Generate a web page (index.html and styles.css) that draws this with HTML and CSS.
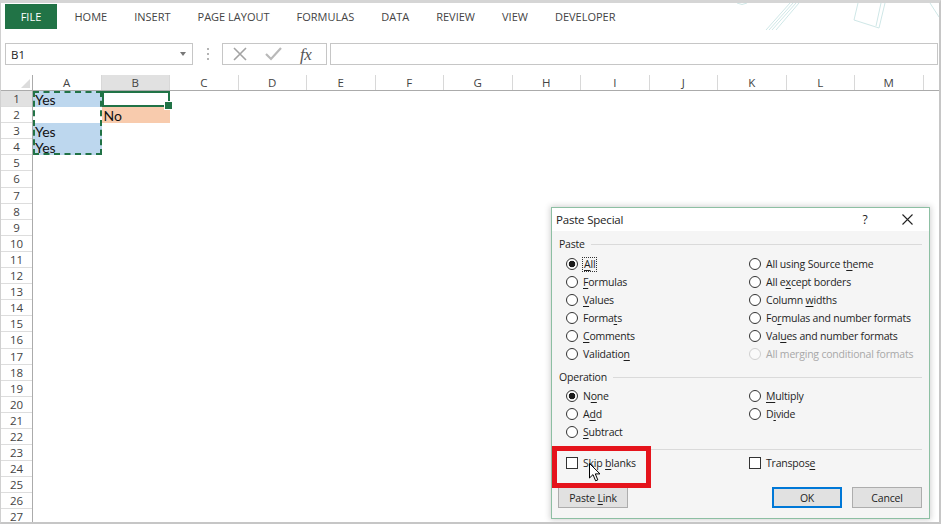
FILE: index.html
```html
<!DOCTYPE html>
<html>
<head>
<meta charset="utf-8">
<link rel="stylesheet" href="styles.css">
</head>
<body>
<div class="window">
  <div class="ribbon">
    <div class="tab file">FILE</div>
    <div class="tab">HOME</div>
    <div class="tab">INSERT</div>
    <div class="tab">PAGE LAYOUT</div>
    <div class="tab">FORMULAS</div>
    <div class="tab">DATA</div>
    <div class="tab">REVIEW</div>
    <div class="tab">VIEW</div>
    <div class="tab">DEVELOPER</div>
    <svg class="art" width="208" height="27" viewBox="0 0 208 27">
      <g fill="none" stroke="#cfe7e7" stroke-width="1">
        <path d="M4 0 Q9 3 14 0"/>
        <path d="M57 0 L33 27 M60 0 L36 27 M63 0 L39 27 M66 0 L43 27"/>
        <path d="M125 0 L121 17 L146 25 L152 0 M148 0 L143 23"/>
        <path d="M197 0 L206 14"/>
      </g>
    </svg>
  </div>

  <div class="fbar">
    <div class="namebox"><span>B1</span><span class="caret"></span></div>
    <div class="grip"><span class="dot"></span><span class="dot"></span><span class="dot"></span></div>
    <div class="fbtns">
      <svg class="ico-x" width="14" height="14" viewBox="0 0 14 14"><path d="M1 1 L13 13 M13 1 L1 13" stroke="#a3a3a3" stroke-width="1.6" fill="none"/></svg>
      <svg class="ico-ok" width="17" height="14" viewBox="0 0 17 14"><path d="M1 7 L6 12 L16 1" stroke="#b9b9b9" stroke-width="2.2" fill="none"/></svg>
      <span class="fx">fx</span>
    </div>
    <div class="finput"></div>
  </div>

  <div class="sheet">
    <div class="colheads">
      <div class="corner"><span class="tri"></span></div>
      <div class="ch">A</div>
      <div class="ch sel">B</div>
      <div class="ch">C</div>
      <div class="ch">D</div>
      <div class="ch">E</div>
      <div class="ch">F</div>
      <div class="ch">G</div>
      <div class="ch">H</div>
      <div class="ch">I</div>
      <div class="ch">J</div>
      <div class="ch">K</div>
      <div class="ch">L</div>
      <div class="ch">M</div>
      <div class="ch"></div>
    </div>
    <div class="gridbody">
      <div class="rowheads">
        <div class="rh sel">1</div><div class="rh">2</div><div class="rh">3</div><div class="rh">4</div>
        <div class="rh">5</div><div class="rh">6</div><div class="rh">7</div><div class="rh">8</div>
        <div class="rh">9</div><div class="rh">10</div><div class="rh">11</div><div class="rh">12</div>
        <div class="rh">13</div><div class="rh">14</div><div class="rh">15</div><div class="rh">16</div>
        <div class="rh">17</div><div class="rh">18</div><div class="rh">19</div><div class="rh">20</div>
        <div class="rh">21</div><div class="rh">22</div><div class="rh">23</div><div class="rh">24</div>
        <div class="rh">25</div><div class="rh">26</div><div class="rh">27</div>
      </div>
      <div class="cells">
        <div class="cell a r1 blue">Yes</div>
        <div class="cell b r2 orange">No</div>
        <div class="cell a r3 blue">Yes</div>
        <div class="cell a r4 blue">Yes</div>
        <div class="active"></div>
        <div class="marquee"></div>
      </div>
    </div>
  </div>

  <div class="dialog">
    <div class="titlebar">
      <span class="ttl">Paste Special</span>
      <span class="tq">?</span>
      <span class="tx"><svg width="11" height="11" viewBox="0 0 11 11"><path d="M0.5 0.5 L10.5 10.5 M10.5 0.5 L0.5 10.5" stroke="#222" stroke-width="1.1" fill="none"/></svg></span>
    </div>
    <div class="dbody">
      <div class="sec">Paste</div>
      <div class="opts paste">
        <div class="opt"><span class="radio on"></span><span class="lbl focus"><u>A</u>ll</span></div>
        <div class="opt"><span class="radio"></span><span class="lbl">All using Source t<u>h</u>eme</span></div>
        <div class="opt"><span class="radio"></span><span class="lbl"><u>F</u>ormulas</span></div>
        <div class="opt"><span class="radio"></span><span class="lbl">All e<u>x</u>cept borders</span></div>
        <div class="opt"><span class="radio"></span><span class="lbl"><u>V</u>alues</span></div>
        <div class="opt"><span class="radio"></span><span class="lbl">Column <u>w</u>idths</span></div>
        <div class="opt"><span class="radio"></span><span class="lbl">Forma<u>t</u>s</span></div>
        <div class="opt"><span class="radio"></span><span class="lbl">Fo<u>r</u>mulas and number formats</span></div>
        <div class="opt"><span class="radio"></span><span class="lbl"><u>C</u>omments</span></div>
        <div class="opt"><span class="radio"></span><span class="lbl">Val<u>u</u>es and number formats</span></div>
        <div class="opt"><span class="radio"></span><span class="lbl">Validatio<u>n</u></span></div>
        <div class="opt dis"><span class="radio"></span><span class="lbl">All merging conditional formats</span></div>
      </div>
      <div class="sec op">Operation</div>
      <div class="opts operation">
        <div class="opt"><span class="radio on"></span><span class="lbl">N<u>o</u>ne</span></div>
        <div class="opt"><span class="radio"></span><span class="lbl"><u>M</u>ultiply</span></div>
        <div class="opt"><span class="radio"></span><span class="lbl">A<u>d</u>d</span></div>
        <div class="opt"><span class="radio"></span><span class="lbl">D<u>i</u>vide</span></div>
        <div class="opt"><span class="radio"></span><span class="lbl"><u>S</u>ubtract</span></div>
        <div class="opt"></div>
      </div>
      <div class="sep"></div>
      <div class="opts checks">
        <div class="opt"><span class="check"></span><span class="lbl">Skip <u>b</u>lanks</span></div>
        <div class="opt"><span class="check"></span><span class="lbl">Transpos<u>e</u></span></div>
      </div>
      <div class="buttons">
        <div class="btn"><span class="lbl">Paste <u>L</u>ink</span></div>
        <div class="spacer"></div>
        <div class="btn ok">OK</div>
        <div class="btn">Cancel</div>
      </div>
    </div>
    <div class="highlight"></div>
    <svg class="cursor" width="12" height="19" viewBox="0 0 12 19">
      <path d="M0.5 0.5 L0.5 15 L4 11.6 L6.6 17.8 L8.8 16.9 L6.3 10.9 L11 10.9 Z" fill="#fff" stroke="#000" stroke-width="1" stroke-linejoin="miter"/>
    </svg>
  </div>
</div>
</body>
</html>
```

FILE: styles.css
```css
* { box-sizing: border-box; }
html, body { margin: 0; padding: 0; }
body {
  width: 942px;
  height: 528px;
  background: #ffffff;
  font-family: "Open Sans", "Noto Sans", sans-serif;
  overflow: hidden;
}

.window {
  position: relative;
  width: 941px;
  height: 524px;
  border-top: 3px solid #d5d5d5;
  border-left: 1px solid #d0d0d0;
  border-right: 2px solid #c6c6c6;
  border-bottom: 2px solid #c6c6c6;
  overflow: hidden;
  background: #fff;
}

/* ribbon tabs */
.ribbon {
  position: relative;
  height: 27px;
  display: flex;
  align-items: stretch;
  padding-left: 4px;
}
.tab {
  display: flex;
  align-items: center;
  padding: 0 13.5px 1px;
  font-size: 11px;
  color: #444;
  white-space: nowrap;
}
.tab.file {
  width: 52px;
  margin: 1px 4px 1px 0;
  padding: 0 0 1px;
  justify-content: center;
  background: #217346;
  color: #fff;
}
.art {
  position: absolute;
  left: 732px;
  top: 0;
}

/* formula bar */
.fbar {
  display: flex;
  height: 22px;
  margin-top: 13px;
  padding-left: 4px;
  padding-right: 1px;
}
.namebox {
  width: 188px;
  flex: none;
  border: 1px solid #c6c6c6;
  display: flex;
  align-items: center;
  justify-content: space-between;
  padding: 0 6px 0 5px;
  font-size: 11.5px;
  color: #222;
}
.caret {
  width: 0;
  height: 0;
  border-left: 3.5px solid transparent;
  border-right: 3.5px solid transparent;
  border-top: 4px solid #777;
}
.grip {
  width: 29px;
  flex: none;
  display: flex;
  flex-direction: column;
  align-items: center;
  justify-content: center;
  gap: 3px;
}
.dot {
  width: 2px;
  height: 2px;
  background: #b4b4b4;
}
.fbtns {
  width: 105px;
  flex: none;
  border: 1px solid #c6c6c6;
  display: flex;
  align-items: center;
  padding-left: 10px;
}
.ico-ok { margin-left: 18px; }
.fx {
  margin-left: 18px;
  font-family: "Liberation Serif", "DejaVu Serif", serif;
  font-style: italic;
  font-size: 17px;
  color: #555;
  letter-spacing: -0.5px;
  line-height: 1;
}
.finput {
  flex: 1;
  margin-left: 3px;
  border: 1px solid #c6c6c6;
}

/* sheet */
.sheet { margin-top: 10px; }
.colheads {
  display: flex;
  height: 16px;
  border-bottom: 1px solid #ababab;
}
.corner {
  width: 32px;
  flex: none;
  border-right: 1px solid #ababab;
  display: flex;
  align-items: flex-end;
  justify-content: flex-end;
  padding: 0 2px 2px 0;
}
.tri {
  width: 0;
  height: 0;
  border-left: 9px solid transparent;
  border-bottom: 9px solid #dcdcdc;
}
.ch {
  width: 68.5px;
  flex: none;
  border-right: 1px solid #d8d8d8;
  text-align: center;
  font-size: 11.5px;
  line-height: 15px;
  color: #444;
}
.ch.sel { background: #e1e1e1; }

.gridbody { display: flex; }
.rowheads {
  width: 32px;
  flex: none;
  border-right: 1px solid #ababab;
}
.rh {
  height: 16.1px;
  border-bottom: 1px solid #dddddd;
  text-align: center;
  font-size: 11.5px;
  line-height: 15px;
  color: #444;
}
.rh.sel { background: #e1e1e1; }

.cells {
  display: grid;
  grid-template-columns: repeat(13, 68.5px);
  grid-auto-rows: 16.1px;
  align-content: start;
}
.cell {
  font-family: Lato, "Liberation Sans", sans-serif;
  font-size: 14px;
  line-height: 17px;
  padding-left: 2px;
  color: #111;
}
.a { grid-column: 1; }
.b { grid-column: 2; }
.r1 { grid-row: 1; }
.r2 { grid-row: 2; }
.r3 { grid-row: 3; }
.r4 { grid-row: 4; }
.blue { background: #bdd7ee; }
.orange { background: #f8cbad; }
.active {
  grid-column: 2;
  grid-row: 1;
  border: 2px solid #217346;
  position: relative;
}
.active::after {
  content: "";
  position: absolute;
  right: -5px;
  bottom: -5px;
  width: 7px;
  height: 7px;
  background: #217346;
  border: 1px solid #fff;
}
.marquee {
  grid-column: 1;
  grid-row: 1 / 5;
  border: 2px dashed #217346;
}

/* dialog */
.dialog {
  position: absolute;
  left: 550px;
  top: 204px;
  width: 379px;
  height: 312px;
  border: 1px solid #8dbfa3;
  box-shadow: 0 0 6px 1px rgba(0, 0, 0, 0.18);
  background: #f5f5f5;
  display: flex;
  flex-direction: column;
  font-family: "Open Sans", "Noto Sans", sans-serif;
  font-size: 10.5px;
  letter-spacing: -0.2px;
  color: #1e1e1e;
}
.titlebar {
  height: 23px;
  flex: none;
  background: #fff;
  display: flex;
  align-items: center;
  padding: 0 0 1px 4px;
  font-size: 11.5px;
  color: #222;
}
.ttl { flex: 1; }
.tq {
  width: 20px;
  margin-right: 10px;
  text-align: center;
  font-size: 12px;
}
.tx {
  width: 44px;
  display: flex;
  justify-content: center;
  align-items: center;
}
.dbody {
  flex: 1;
  padding: 6px 7px 0 7px;
  display: flex;
  flex-direction: column;
}
.sec {
  height: 14px;
  display: flex;
  align-items: center;
  gap: 6px;
  font-size: 10.5px;
}
.sec::after {
  content: "";
  flex: 1;
  border-top: 1px solid #dadada;
}
.sec.op { margin-top: 7px; }
.opts {
  display: grid;
  grid-template-columns: 183px 1fr;
  grid-auto-rows: 18px;
  padding-left: 7px;
}
.paste { margin-top: 4px; }
.operation { margin-top: 3px; }
.checks { margin-top: 4px; }
.opt {
  display: flex;
  align-items: center;
  white-space: nowrap;
}
.lbl { white-space: pre; }
.lbl u { text-decoration-thickness: 1px; text-underline-offset: 2px; }
.radio {
  width: 12px;
  height: 12px;
  flex: none;
  margin-right: 5px;
  border: 1px solid #333;
  border-radius: 50%;
  background: #fff;
}
.radio.on {
  background: radial-gradient(circle, #1a1a1a 0 3px, #fff 3.6px);
}
.opt.dis { color: #a8a8a8; }
.opt.dis .radio { border-color: #d0d0d0; background: #fafafa; }
.focus {
  outline: 1px dotted #333;
  padding: 0 1px;
  line-height: 13px;
}
.check {
  width: 12px;
  height: 12px;
  flex: none;
  margin-right: 5px;
  border: 1px solid #333;
  background: #fff;
}
.sep {
  margin-top: 8px;
  border-top: 1px solid #dadada;
}
.buttons {
  margin-top: 15px;
  display: flex;
  margin-left: -1px;
}
.spacer { flex: 1; }
.btn {
  width: 70px;
  height: 21px;
  border: 1px solid #adadad;
  background: #e1e1e1;
  display: flex;
  align-items: center;
  justify-content: center;
}
.btn.ok {
  margin-right: 10px;
  border: 1px solid #0078d7;
  box-shadow: inset 0 0 0 1px #0078d7;
}
.highlight {
  position: absolute;
  left: 0;
  top: 238px;
  width: 99px;
  height: 42px;
  border: 5px solid #e5141c;
}
.cursor {
  position: absolute;
  left: 37px;
  top: 255px;
}
```
